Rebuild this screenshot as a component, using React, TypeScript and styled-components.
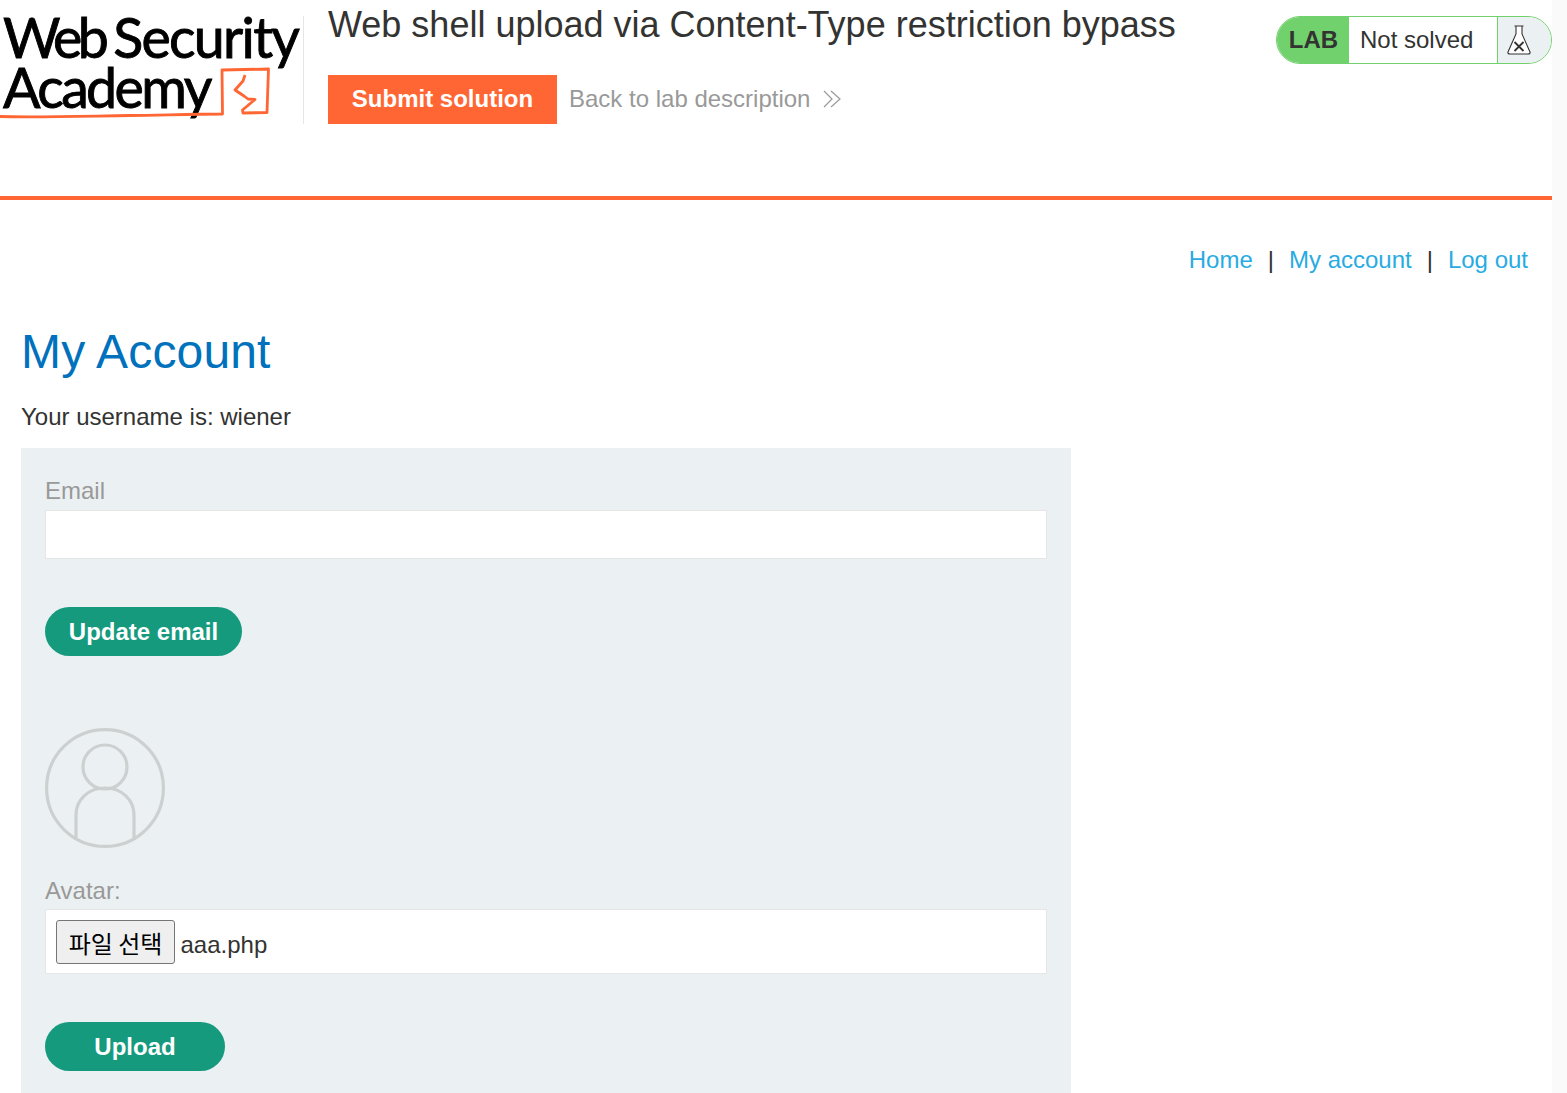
import React from "react";
import styled, { createGlobalStyle } from "styled-components";

const Global = createGlobalStyle`
  html, body { margin: 0; padding: 0; background: #fff; height: 100%; overflow: hidden; }
  #root { height: 1093px; overflow: hidden; }
  * { box-sizing: border-box; }
`;

const Shell = styled.div`
  display: flex;
  width: 1567px;
  height: 1093px;
  font-family: "Liberation Sans", Arial, sans-serif;
  font-size: 24px;
  color: #333332;
`;

const Page = styled.div`
  width: 1552px;
  display: flex;
  flex-direction: column;
`;

const Gutter = styled.div`
  width: 15px;
  background: #fafafa;
`;

const Header = styled.header`
  height: 200px;
  flex: none;
  border-bottom: 4px solid #ff6633;
  display: flex;
  align-items: flex-start;
`;

const LogoBox = styled.div`
  position: relative;
  width: 304px;
  height: 124px;
  flex: none;
  padding: 12px 0 0 3px;
  font-family: Lato, "Liberation Sans", sans-serif;
  font-weight: 400;
  color: #000;
  &::after {
    content: "";
    position: absolute;
    right: 0;
    top: 16px;
    bottom: 0;
    width: 1px;
    background: #e6e6e6;
  }
`;

const LogoLine = styled.div`
  font-size: 55.5px;
  line-height: 50px;
  height: 50px;
  letter-spacing: -2.6px;
  word-spacing: -3px;
  white-space: nowrap;
  -webkit-text-stroke: 0.9px #000;
`;

const LogoWord = styled.span<{ $spacing: number }>`
  letter-spacing: ${(p) => p.$spacing}px;
`;

const LogoMark = styled.svg`
  position: absolute;
  left: 0;
  top: 0;
`;

const HeaderMain = styled.div`
  flex: none;
  width: 948px;
  padding: 0 0 0 24px;
`;

const Title = styled.h2`
  margin: 0;
  font-size: 36px;
  line-height: 50px;
  font-weight: 400;
  color: #333332;
  white-space: nowrap;
`;

const ActionRow = styled.div`
  display: flex;
  align-items: center;
  margin-top: 25px;
`;

const SubmitButton = styled.button`
  width: 229px;
  height: 49px;
  border: 0;
  padding: 0 0 2px;
  background: #ff6633;
  color: #fff;
  font: bold 24px "Liberation Sans", Arial, sans-serif;
`;

const BackLink = styled.a`
  display: flex;
  align-items: center;
  margin: 0 0 2px 12px;
  color: #999;
  font-size: 24px;
  white-space: nowrap;
`;

const BackIcon = styled.svg`
  margin-left: 13px;
`;

const Badge = styled.div`
  margin: 16px 0 0 auto;
  width: 276px;
  height: 48px;
  display: flex;
  border-radius: 24px;
  overflow: hidden;
  border: 1px solid #70d16d;
  flex: none;
`;

const BadgeTag = styled.div`
  width: 73px;
  background: #70d16d;
  font-weight: bold;
  text-align: center;
  line-height: 48px;
  padding-left: 2px;
  margin: -1px 0 -1px -1px;
  height: 48px;
`;

const BadgeStatus = styled.div`
  flex: 1;
  padding-left: 11px;
  line-height: 46px;
  background: #fff;
`;

const BadgeIcon = styled.div`
  width: 54px;
  background: #ebf0f2;
  border-left: 1px solid #70d16d;
  display: flex;
  align-items: center;
  padding-left: 8px;
`;

const Main = styled.main`
  flex: 1;
  padding: 0 21px;
  display: flex;
  flex-direction: column;
  min-height: 0;
`;

const TopNav = styled.nav`
  display: flex;
  justify-content: flex-end;
  align-items: center;
  height: 28px;
  margin-top: 46px;
  padding-right: 3px;
`;

const NavLink = styled.a`
  color: #29abe2;
  white-space: nowrap;
`;

const NavSep = styled.span`
  color: #333332;
  margin: 0 15px;
`;

const Heading = styled.h1`
  margin: 51px 0 0;
  font-size: 48px;
  line-height: 54px;
  font-weight: 400;
  letter-spacing: 0.15px;
  color: #0071bc;
`;

const Username = styled.p`
  margin: 24px 0 0;
  line-height: 28px;
`;

const Panel = styled.section`
  margin-top: 17px;
  width: 1050px;
  flex: 1;
  background: #ebf0f2;
  padding: 29px 24px 0;
`;

const FieldLabel = styled.label`
  display: block;
  color: #999;
  line-height: 28px;
  height: 28px;
`;

const TextField = styled.div`
  margin-top: 5px;
  width: 1002px;
  height: 49px;
  background: #fff;
  border: 1px solid #e6e6e6;
`;

const PillButton = styled.button<{ $w: number }>`
  display: block;
  width: ${(p) => p.$w}px;
  height: 49px;
  border: 0;
  border-radius: 25px;
  background: #159a7e;
  color: #fff;
  font: bold 24px "Liberation Sans", Arial, sans-serif;
  padding: 0;
`;

const EmailSubmit = styled(PillButton)`
  margin-top: 48px;
`;

const Avatar = styled.svg`
  display: block;
  margin-top: 72px;
`;

const AvatarLabel = styled(FieldLabel)`
  margin-top: 29px;
`;

const FileBox = styled.div`
  margin-top: 4px;
  width: 1002px;
  height: 65px;
  background: #fff;
  border: 1px solid #e6e6e6;
  padding: 10px;
  display: flex;
  align-items: flex-start;
`;

const FileButton = styled.button`
  width: 119px;
  height: 44px;
  background: #efefef;
  border: 1px solid #767676;
  border-radius: 3px;
  padding: 2px 0 0;
  color: #000;
  font: 24px "Noto Sans CJK KR", "Liberation Sans", sans-serif;
  line-height: 40px;
`;

const FileName = styled.span`
  margin-left: 5.5px;
  line-height: 50px;
  color: #333332;
`;

const UploadSubmit = styled(PillButton)`
  margin-top: 48px;
`;

export default function App() {
  return (
    <>
      <Global />
      <Shell>
        <Page>
          <Header>
            <LogoBox>
              <LogoLine>
                <LogoWord $spacing={-4.4}>Web</LogoWord> <LogoWord $spacing={-1.7}>Security</LogoWord>
              </LogoLine>
              <LogoLine>Academy</LogoLine>
              <LogoMark width="303" height="124" viewBox="0 0 303 124" fill="none" stroke="#ff6633" strokeWidth="2.8" strokeLinejoin="round">
                <path d="M0 116.5 C40 117.5 90 116 130 115.5 C165 115 195 114 222.5 114 L222 70 L268.5 69 L267 112.5 L243 113 L242.5 110 L255 99.5 L248 99 L244 96 L235 90 L243 81 L245 75" />
              </LogoMark>
            </LogoBox>
            <HeaderMain>
              <Title>Web shell upload via Content-Type restriction bypass</Title>
              <ActionRow>
                <SubmitButton>Submit solution</SubmitButton>
                <BackLink>
                  Back to lab description
                  <BackIcon width="18" height="18" viewBox="0 0 18 18" fill="none" stroke="#999" strokeWidth="1.2">
                    <path d="M1 1 L9 9 L1 17 M8 1 L17 9 L8 17" />
                  </BackIcon>
                </BackLink>
              </ActionRow>
            </HeaderMain>
            <Badge>
              <BadgeTag>LAB</BadgeTag>
              <BadgeStatus>Not solved</BadgeStatus>
              <BadgeIcon>
                <svg width="26" height="30" viewBox="0 0 26 30" fill="#fff" stroke="#333332" strokeWidth="1.1">
                  <path d="M8.5 1 H17.5 M10 1 V9 L2 27 Q1.5 29 4 29 H22 Q24.5 29 24 27 L16 9 V1" />
                  <path d="M8.5 17 L17.5 26 M17.5 17 L8.5 26" strokeWidth="1.8" fill="none" />
                </svg>
              </BadgeIcon>
            </Badge>
          </Header>
          <Main>
            <TopNav>
              <NavLink>Home</NavLink>
              <NavSep>|</NavSep>
              <NavLink>My account</NavLink>
              <NavSep>|</NavSep>
              <NavLink>Log out</NavLink>
            </TopNav>
            <Heading>My Account</Heading>
            <Username>Your username is: wiener</Username>
            <Panel>
              <FieldLabel>Email</FieldLabel>
              <TextField />
              <EmailSubmit $w={197}>Update email</EmailSubmit>
              <Avatar width="120" height="120" viewBox="0 0 120 120" fill="none" stroke="#ccd0d0" strokeWidth="3.2">
                <circle cx="60" cy="60" r="58.4" />
                <circle cx="60" cy="39" r="22" />
                <path d="M31 112 V87 C31 72 43 60 60 60 C77 60 89 72 89 87 V112" />
              </Avatar>
              <AvatarLabel>Avatar:</AvatarLabel>
              <FileBox>
                <FileButton>파일 선택</FileButton>
                <FileName>aaa.php</FileName>
              </FileBox>
              <UploadSubmit $w={180}>Upload</UploadSubmit>
            </Panel>
          </Main>
        </Page>
        <Gutter />
      </Shell>
    </>
  );
}
